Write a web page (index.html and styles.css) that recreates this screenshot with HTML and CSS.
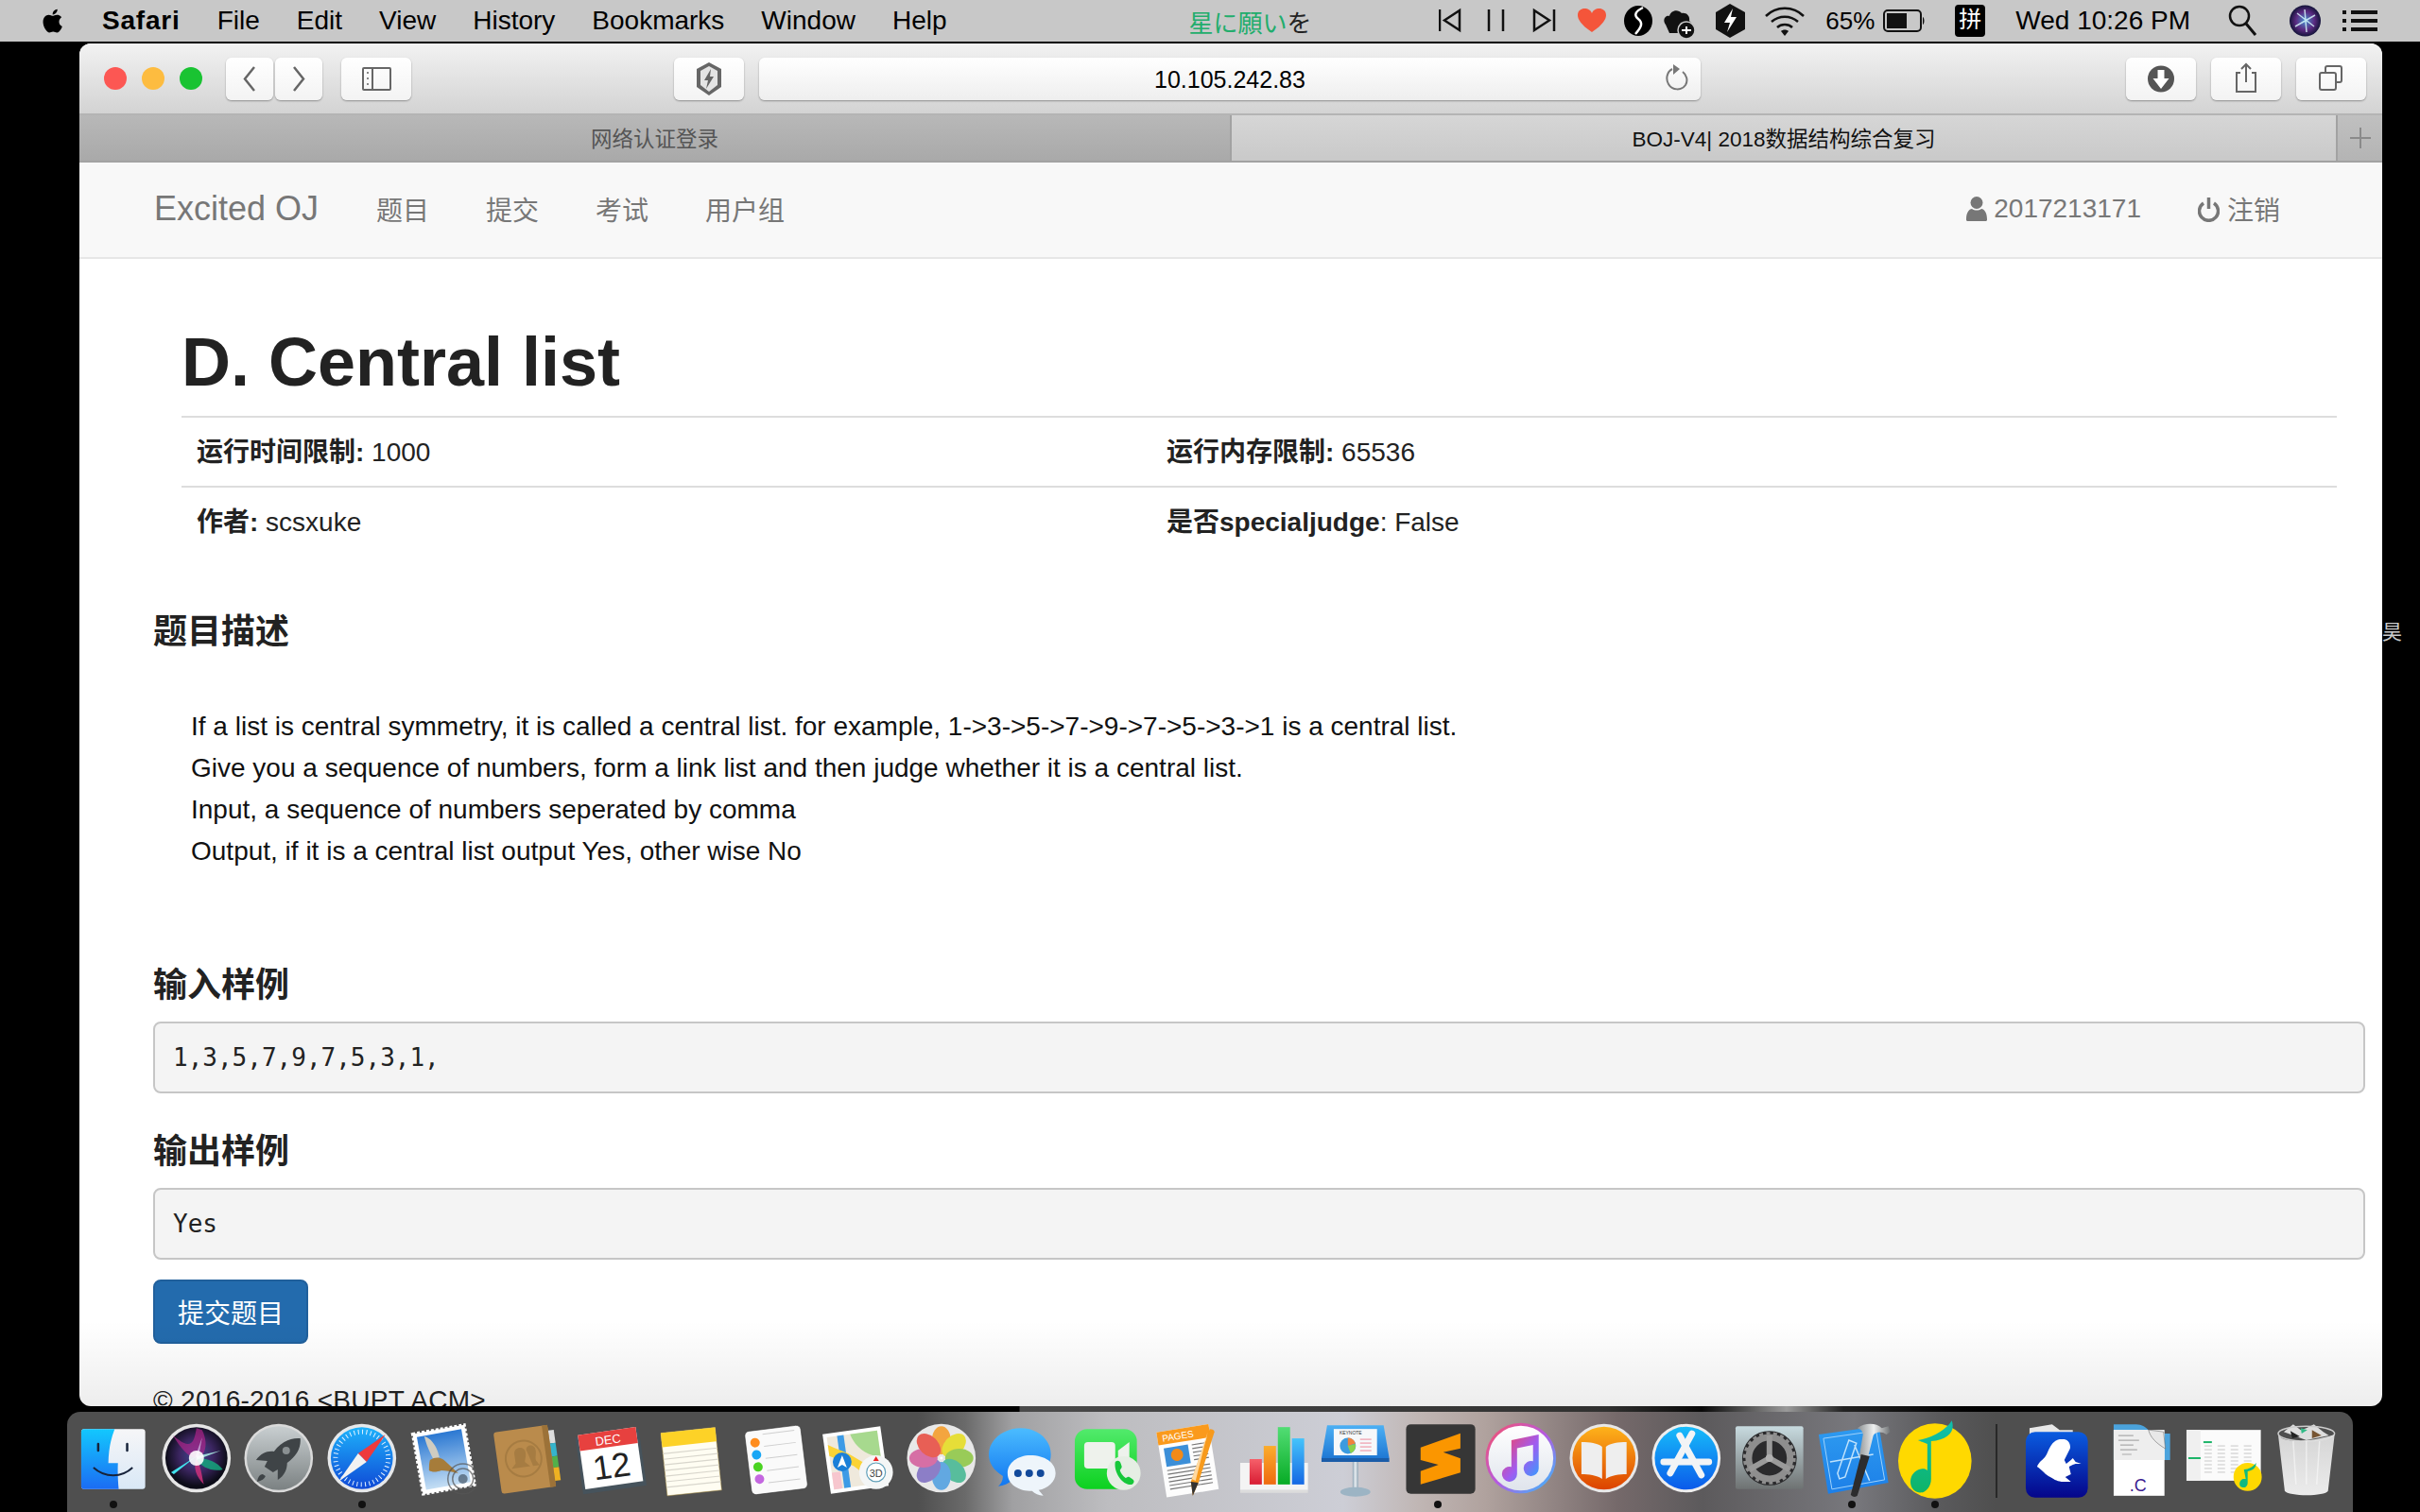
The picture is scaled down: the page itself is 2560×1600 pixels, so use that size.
FILE: index.html
```html
<!DOCTYPE html>
<html lang="zh">
<head>
  <meta charset="UTF-8" />
  <title>BOJ-V4| 2018数据结构综合复习</title>
  <link rel="stylesheet" href="styles.css">
</head>
<body>

<!-- mac menu bar -->
<div class="menubar">
  <svg class="apple" width="26" height="34" viewBox="0 0 26 32"><path fill="#000" d="M20.5 17c0-3.2 2.6-4.7 2.7-4.8-1.5-2.2-3.8-2.5-4.6-2.5-2-.2-3.8 1.1-4.8 1.1s-2.5-1.1-4.1-1.1c-2.1 0-4 1.2-5.1 3.1-2.2 3.8-.6 9.4 1.6 12.5 1 1.5 2.3 3.2 3.9 3.1 1.6-.1 2.2-1 4.1-1s2.4 1 4.1 1c1.7 0 2.8-1.5 3.8-3 1.2-1.7 1.7-3.4 1.7-3.5-.1 0-3.3-1.3-3.3-4.9zM17.4 7.6c.9-1 1.5-2.5 1.3-3.9-1.3.1-2.8.9-3.7 1.9-.8.9-1.5 2.4-1.3 3.8 1.4.1 2.9-.7 3.7-1.8z"/></svg>
  <div class="menus">
    <b>Safari</b><span>File</span><span>Edit</span><span>View</span><span>History</span><span>Bookmarks</span><span>Window</span><span>Help</span>
  </div>
  <div class="song">星に願い<span>を</span></div>
  <div class="status">
    <svg width="387" height="44" viewBox="0 0 387 44">
      <g fill="none" stroke="#111" stroke-width="2.500">
        <path d="M1 10v23M22 11 6 21.500 22 32z"/>
        <path d="M53 10v23M68 10v23"/>
        <path d="M122 10v23M101 11l16 10.500-16 10.500z"/>
      </g>
      <path fill="#f4553a" d="M162 34C150 26 147 20 147 16c0-5 4-7 7-7 4 0 7 2 8 5 1-3 4-5 8-5 3 0 7 2 7 7 0 4-3 10-15 18z"/>
      <ellipse cx="211" cy="22" rx="15" ry="16" fill="#000"/>
      <path fill="none" stroke="#fff" stroke-width="2.500" d="M216 8c-8 4-10 8-5 12s4 8-3 16"/>
      <path fill="#111" d="M240 26c-4-5 0-10 4-9 1-6 9-8 13-3 5-1 9 3 8 8l5 5-8 8h-18z"/>
      <circle cx="262" cy="32" r="9" fill="#111" stroke="#c8c8c8" stroke-width="1.500"/>
      <path fill="none" stroke="#fff" stroke-width="2" d="M257 32h10M262 28v8"/>
      <path fill="#111" d="M308 4l16 9v18l-16 9-15-9V13z"/>
      <path fill="#fff" d="M311 9l-9 15h6l-3 10 10-16h-6z"/>
      <g fill="none" stroke="#111" stroke-width="2.500">
        <path d="M346 17c11-11 29-11 40 0"/>
        <path d="M352 23c8-7 20-7 28 0"/>
        <path d="M358 29c4-4 12-4 16 0"/>
      </g>
      <path fill="#111" d="M366 38l-4-5c2-2 6-2 8 0z"/>
    </svg>
    <span class="pct">65%</span>
    <svg class="battery" width="45" height="44" viewBox="0 0 45 44">
      <rect x="1" y="11" width="39" height="22" rx="4" fill="none" stroke="#111" stroke-width="2"/>
      <rect x="4" y="14" width="21" height="16" fill="#111"/>
      <path d="M42 18c2 1 2 7 0 8z" fill="#111"/>
    </svg>
    <span class="ime">拼</span>
    <span class="clock">Wed 10:26 PM</span>
    <svg class="search" width="31" height="44" viewBox="0 0 31 44">
      <circle cx="12" cy="17" r="10" fill="none" stroke="#111" stroke-width="2.500"/>
      <path d="M19 25l10 12" stroke="#111" stroke-width="3"/>
    </svg>
    <svg class="siri-small" width="33" height="44" viewBox="0 0 33 44">
      <defs><radialGradient id="sirismall"><stop offset="0" stop-color="#4a8fd0"/><stop offset=".6" stop-color="#5a2a80"/><stop offset="1" stop-color="#14143a"/></radialGradient></defs>
      <circle cx="16.500" cy="22" r="16.500" fill="url(#sirismall)"/>
      <path d="M6 28 27 16M16 10l2 24M8 14l18 14" stroke="#dff" stroke-width="1.500" opacity=".8"/>
    </svg>
    <svg class="lines" width="37" height="44" viewBox="0 0 37 44">
      <path d="M9 13h28M9 22h28M9 31h28" stroke="#111" stroke-width="4"/>
      <path d="M0 13h4M0 22h4M0 31h4" stroke="#111" stroke-width="4"/>
    </svg>
  </div>
</div>

<div class="desktop">
  <div class="window">

    <div class="toolbar">
      <div class="lights"><i class="red"></i><i class="amber"></i><i class="green"></i></div>
      <div class="tool back"><svg width="50" height="45" viewBox="0 0 50 45"><path d="M30 10 20 22.500 30 35" fill="none" stroke="#666" stroke-width="2.500"/></svg></div>
      <div class="tool fwd"><svg width="50" height="45" viewBox="0 0 50 45"><path d="M20 10 30 22.500 20 35" fill="none" stroke="#666" stroke-width="2.500"/></svg></div>
      <div class="tool side"><svg width="74" height="45" viewBox="0 0 74 45"><rect x="23" y="11" width="29" height="23" rx="1" fill="none" stroke="#666" stroke-width="2"/><path d="M33 11v23" stroke="#666" stroke-width="2"/><path d="M28 15v14" stroke="#888" stroke-width="2" stroke-dasharray="2 4"/></svg></div>
      <div class="tool shield"><svg width="74" height="45" viewBox="0 0 74 45"><path d="M37 5l13 7v19l-13 9-13-9V12z" fill="#666"/><path d="M37 9l9 5v15l-9 7-9-7V14z" fill="#e4e4e4"/><path d="M39 12l-7 12h4l-2 9 8-13h-4z" fill="#666"/></svg></div>
      <div class="urlbar">
        <span>10.105.242.83</span>
        <svg class="reload" width="26" height="34" viewBox="0 0 26 34"><path d="M8 7C2 10 1 18 4 23c4 7 14 7 18 1 3-5 1-11-3-14" fill="none" stroke="#777" stroke-width="2"/><path d="M9 2v11l7-6z" fill="#777"/></svg>
      </div>
      <div class="tool dl"><svg width="74" height="45" viewBox="0 0 74 45"><circle cx="37" cy="22.500" r="14" fill="#555"/><path d="M33.500 13h7v9h5L37 33l-8.500-11h5z" fill="#fff"/></svg></div>
      <div class="tool share"><svg width="74" height="45" viewBox="0 0 74 45"><path d="M31 16h-4v20h20V16h-4" fill="none" stroke="#666" stroke-width="2"/><path d="M37 26V7M32 12l5-5 5 5" fill="none" stroke="#666" stroke-width="2"/></svg></div>
      <div class="tool tabs"><svg width="74" height="45" viewBox="0 0 74 45"><rect x="25" y="16" width="17" height="18" rx="2" fill="none" stroke="#666" stroke-width="2"/><path d="M31 16v-5a2 2 0 0 1 2-2h13a2 2 0 0 1 2 2v13a2 2 0 0 1-2 2h-4" fill="none" stroke="#666" stroke-width="2"/></svg></div>
    </div>

    <div class="tabbar">
      <div class="tab">网络认证登录</div>
      <div class="tab active">BOJ-V4| 2018数据结构综合复习</div>
      <div class="newtab"><svg width="22" height="22" viewBox="0 0 22 22"><path d="M11 0v22M0 11h22" stroke="#8a8a8a" stroke-width="2"/></svg></div>
    </div>

    <div class="page">
      <nav class="navbar">
        <a class="brand">Excited OJ</a>
        <a>题目</a>
        <a>提交</a>
        <a>考试</a>
        <a>用户组</a>
        <div class="nav-right">
          <a class="user"><svg width="22" height="28" viewBox="0 0 22 28"><circle cx="11" cy="7.500" r="6.500" fill="#777"/><path d="M1 27a2 2 0 0 1-1-2c0-7 3-11 6-11 3 2 7 2 10 0 3 0 6 4 6 11a2 2 0 0 1-1 2z" fill="#777"/></svg>2017213171</a>
          <a class="logout"><svg width="23" height="28" viewBox="0 0 23 28"><path d="M6 8a10 10 0 1 0 11 0" fill="none" stroke="#777" stroke-width="3.500"/><path d="M11.500 2v12" stroke="#777" stroke-width="3.500"/></svg>注销</a>
        </div>
      </nav>

      <div class="content">
        <h1>D. Central list</h1>
        <table class="info">
          <tr>
            <td class="col-a"><b>运行时间限制:</b> 1000</td>
            <td><b>运行内存限制:</b> 65536</td>
          </tr>
          <tr>
            <td class="col-a"><b>作者:</b> scsxuke</td>
            <td><b>是否specialjudge</b>: False</td>
          </tr>
        </table>

        <h4 class="first">题目描述</h4>
        <div class="desc">
          <p>If a list is central symmetry, it is called a central list. for example, 1-&gt;3-&gt;5-&gt;7-&gt;9-&gt;7-&gt;5-&gt;3-&gt;1 is a central list.</p>
          <p>Give you a sequence of numbers, form a link list and then judge whether it is a central list.</p>
          <p>Input, a sequence of numbers seperated by comma</p>
          <p>Output, if it is a central list output Yes, other wise No</p>
        </div>

        <h4 class="sample">输入样例</h4>
        <pre>1,3,5,7,9,7,5,3,1,</pre>
        <h4 class="sample second">输出样例</h4>
        <pre>Yes</pre>
        <button class="btn">提交题目</button>
        <footer>© 2016-2016 &lt;BUPT ACM&gt;</footer>
      </div>
    </div>
  </div>
  <span class="edge-char">昊</span>
</div>

<div class="strip"></div>

<!-- dock -->
<div class="dock">
  <div class="app on"><svg viewBox="0 0 88 88">
    <defs>
      <linearGradient id="fa" x1="0" y1="0" x2="0" y2="1"><stop offset="0" stop-color="#13c8fe"/><stop offset="1" stop-color="#1b6cf3"/></linearGradient>
      <linearGradient id="fb" x1="0" y1="0" x2="0" y2="1"><stop offset="0" stop-color="#f6f6f8"/><stop offset="1" stop-color="#d9e8f6"/></linearGradient>
    </defs>
    <rect x="10" y="13" width="68" height="64" rx="3" fill="url(#fb)"/>
    <path d="M13 13h32.500c-4 10-6.500 22-6.700 36.300H49c-.5 9 0 19 .8 27.700H13a3 3 0 0 1-3-3V16a3 3 0 0 1 3-3z" fill="url(#fa)"/>
    <path d="M28 29v7M58.800 29v7" stroke="#17233a" stroke-width="2.500" stroke-linecap="round"/>
    <path d="M23 54c12 11 30 11 41.500 0" fill="none" stroke="#17233a" stroke-width="2"/>
  </svg></div>

  <div class="app"><svg viewBox="0 0 88 88">
    <defs><radialGradient id="sa" cx=".5" cy=".45"><stop offset="0" stop-color="#3c4f95"/><stop offset=".55" stop-color="#3b2560"/><stop offset="1" stop-color="#0c0c18"/></radialGradient></defs>
    <circle cx="44" cy="44" r="36.500" fill="#e6e6e6"/><circle cx="44" cy="44" r="33" fill="url(#sa)"/>
    <path d="M44 12c-3 20-8 22-25 8 10 16 18 24 25 24 8 0 14-14 6-30z" fill="#b5258e" opacity=".65"/>
    <path d="M44 44c6 12 6 22 8 28-8-8-12-18-8-28z" fill="#d8327e" opacity=".8"/>
    <path d="M44 44c12 0 22 4 28 12-10 3-24-2-28-12z" fill="#15a67c" opacity=".85"/>
    <path d="M44 42 70 36 44 46z" fill="#a8e8e0" opacity=".9"/>
    <path d="M44 42 17 59l3 2z" fill="#42e0ec"/>
    <path d="M43 42 50 22l-4 22z" fill="#d8c8f0" opacity=".7"/>
    <circle cx="44" cy="44" r="8" fill="#fff" opacity=".9"/>
  </svg></div>

  <div class="app"><svg viewBox="0 0 88 88">
    <defs><linearGradient id="la" x1="0" y1="0" x2="0" y2="1"><stop offset="0" stop-color="#c9cfd1"/><stop offset="1" stop-color="#7b8182"/></linearGradient></defs>
    <circle cx="44" cy="44" r="36.500" fill="#dadada"/><circle cx="44" cy="44" r="34" fill="url(#la)"/>
    <path d="M67 23c-10-1-21 4-28 14-7-1-14 2-19 9l12 1-3 6 9 6 5-3 0 11c7-4 10-11 10-18 10-7 15-16 14-26z" fill="#3f4447"/>
    <path d="M27 61c-3 0-5 3-6 8 5-1 8-3 9-6z" fill="#3f4447"/>
    <circle cx="52" cy="36" r="4" fill="#8a9092"/>
  </svg></div>

  <div class="app on"><svg viewBox="0 0 88 88">
    <defs><linearGradient id="saf" x1="0" y1="0" x2="0" y2="1"><stop offset="0" stop-color="#1eb2fb"/><stop offset="1" stop-color="#0f49d6"/></linearGradient></defs>
    <circle cx="44" cy="44" r="36.500" fill="#e6e8ea"/><circle cx="44" cy="44" r="33" fill="url(#saf)"/>
    <circle cx="44" cy="44" r="28" fill="none" stroke="#e6f2ff" stroke-width="5" stroke-dasharray="1 3.400"/>
    <path d="M69 19 40 39 49 48z" fill="#ee3a3c"/>
    <path d="M19 69 40 39 49 48z" fill="#f2f2f2"/>
  </svg></div>

  <div class="app"><svg viewBox="0 0 88 88">
    <defs><linearGradient id="ma" x1="0" y1="0" x2="0" y2="1"><stop offset="0" stop-color="#2b78d2"/><stop offset="1" stop-color="#c4def4"/></linearGradient></defs>
    <g transform="rotate(-10 42 42)">
      <rect x="14" y="13" width="56" height="65" fill="#fff" stroke="#fff" stroke-width="3" stroke-dasharray="3 2"/>
      <rect x="18" y="17" width="48" height="57" fill="url(#ma)"/>
    </g>
    <path d="M22 21c8 2 14 12 16 22l-6 3c-4-8-8-16-10-25z" fill="#d0ccc0"/>
    <path d="M28 46c6-4 12-3 16 1l14 13c-8-2-14-3-18-3-5 2-10 2-13 0 0-4 0-8 1-11z" fill="#a67c3a"/>
    <circle cx="63" cy="66" r="16" fill="none" stroke="#555" stroke-width="1.500" opacity=".7"/>
    <circle cx="63" cy="66" r="11" fill="none" stroke="#555" stroke-width="1.500" opacity=".7"/>
    <circle cx="63" cy="66" r="5" fill="#456" opacity=".7"/>
  </svg></div>

  <div class="app"><svg viewBox="0 0 88 88">
    <g transform="rotate(-8 44 44)">
      <rect x="68" y="18" width="8" height="14" fill="#ddd"/><rect x="68" y="32" width="8" height="14" fill="#35b4cc"/><rect x="68" y="46" width="8" height="12" fill="#52b04a"/><rect x="68" y="58" width="8" height="14" fill="#eeb122"/>
      <rect x="12" y="12" width="58" height="66" rx="3" fill="#ba8b4c"/>
      <rect x="64" y="12" width="6" height="66" fill="#9c7238"/>
      <circle cx="40" cy="44" r="19" fill="none" stroke="#a67c42" stroke-width="2"/>
      <path d="M31 38c0-8 12-8 12 0 0 5-2 7-2 10l5 5H26l5-5c0-3 0-6 0-10z" fill="#a67c42"/>
      <path d="M44 35c1-6 10-5 10 2 0 5-2 8-1 11l3 5h-7c-2-8-3-12-5-18z" fill="#a67c42"/>
    </g>
  </svg></div>

  <div class="app"><svg viewBox="0 0 88 88">
    <g transform="rotate(-8 44 44)">
      <rect x="10" y="17" width="68" height="61" fill="#46535c"/>
      <rect x="13" y="15" width="62" height="58" fill="#fff"/>
      <rect x="13" y="15" width="62" height="17" fill="#e7413f"/>
      <text class="icon-text" x="44" y="29" font-size="13" fill="#fff" text-anchor="middle">DEC</text>
      <text class="icon-text" x="44" y="65" font-size="36" fill="#222" text-anchor="middle">12</text>
    </g>
  </svg></div>

  <div class="app"><svg viewBox="0 0 88 88">
    <g transform="rotate(-6 44 44)">
      <rect x="13" y="14" width="58" height="67" fill="#fffdf2" stroke="#b59a4c" stroke-width=".5"/>
      <rect x="13" y="14" width="58" height="15" fill="#fdd227"/>
      <path d="M13 36h58M13 42h58M13 48h58M13 54h58M13 60h58M13 66h58M13 72h58" stroke="#d8d6cc" stroke-width="1.200"/>
    </g>
  </svg></div>

  <div class="app"><svg viewBox="0 0 88 88">
    <g transform="rotate(-7 44 44)">
      <rect x="14" y="12" width="60" height="68" rx="5" fill="#fafafa" stroke="#333" stroke-width=".6"/>
      <circle cx="24" cy="25" r="5" fill="#ff8d1e"/><circle cx="24" cy="38" r="5" fill="#19a7f5"/><circle cx="24" cy="51" r="5" fill="#4ad321"/><circle cx="24" cy="64" r="5" fill="#c467e0"/>
      <path d="M33 17h34M33 30h34M33 43h34M33 56h34M33 69h34" stroke="#cfcfcf" stroke-width="1"/>
    </g>
  </svg></div>

  <div class="app"><svg viewBox="0 0 88 88">
    <g transform="rotate(-8 40 44)">
      <rect x="9" y="14" width="62" height="64" fill="#fff"/>
      <rect x="13" y="18" width="54" height="56" fill="#efe9dc"/>
      <path d="M24 18h7v56h-7z" fill="#3d9be6"/>
      <path d="M38 18h29v28c-14-2-26-14-29-28z" fill="#a7d98e"/>
      <path d="M13 38l24 14 8 8 8-6-20-16-14-8-6-4z" fill="#fbd335"/>
      <path d="M13 56h9v18h-9z" fill="#f7c6ce"/>
    </g>
    <circle cx="26" cy="48" r="10" fill="#1a7fd8"/><path d="M26 41l5 13-5-3-5 3z" fill="#fff"/>
    <circle cx="62" cy="59" r="18" fill="#f4f6f6"/><circle cx="62" cy="59" r="10" fill="#fff" stroke="#5f9fb8" stroke-width="1.200"/>
    <text class="icon-text" x="62" y="64" font-size="11" fill="#444" text-anchor="middle">3D</text>
    <path d="M62 42l3 5h-6z" fill="#e22"/>
  </svg></div>

  <div class="app"><svg viewBox="0 0 88 88">
    <circle cx="44" cy="44" r="36.500" fill="#e8e8e8"/>
    <g opacity=".85">
      <ellipse cx="44" cy="25" rx="10" ry="15" fill="#f69a22"/>
      <ellipse cx="44" cy="25" rx="10" ry="15" fill="#e6dd1a" transform="rotate(45 44 44)"/>
      <ellipse cx="44" cy="25" rx="10" ry="15" fill="#8cc63f" transform="rotate(90 44 44)"/>
      <ellipse cx="44" cy="25" rx="10" ry="15" fill="#3fb68f" transform="rotate(135 44 44)"/>
      <ellipse cx="44" cy="25" rx="10" ry="15" fill="#4b9ee0" transform="rotate(180 44 44)"/>
      <ellipse cx="44" cy="25" rx="10" ry="15" fill="#7d6cc2" transform="rotate(225 44 44)"/>
      <ellipse cx="44" cy="25" rx="10" ry="15" fill="#d45a9a" transform="rotate(270 44 44)"/>
      <ellipse cx="44" cy="25" rx="10" ry="15" fill="#e8483c" transform="rotate(315 44 44)"/>
    </g>
    <circle cx="44" cy="44" r="1.500" fill="#fff"/>
  </svg></div>

  <div class="app"><svg viewBox="0 0 88 88">
    <defs><linearGradient id="msg" x1="0" y1="0" x2="0" y2="1"><stop offset="0" stop-color="#4bbcff"/><stop offset="1" stop-color="#1176f0"/></linearGradient></defs>
    <path d="M40 12c19 0 32 13 32 28 0 16-14 29-32 29-4 0-7 0-10-1-3 3-8 5-14 6 3-3 5-6 5-11C11 57 6 49 6 40c0-15 15-28 34-28z" fill="url(#msg)"/>
    <path d="M50 41c16 0 27 8 27 19 0 9-8 16-18 18l5 6c-5 0-9-2-12-5-14 0-26-7-26-19 0-11 11-19 24-19z" fill="#eef5fb"/>
    <circle cx="37" cy="60" r="4" fill="#134a9b"/><circle cx="49" cy="60" r="4" fill="#134a9b"/><circle cx="61" cy="60" r="4" fill="#134a9b"/>
  </svg></div>

  <div class="app"><svg viewBox="0 0 88 88">
    <defs><linearGradient id="ft" x1="0" y1="0" x2="0" y2="1"><stop offset="0" stop-color="#52ea6c"/><stop offset="1" stop-color="#0cd11f"/></linearGradient></defs>
    <rect x="10" y="13" width="66" height="64" rx="13" fill="url(#ft)"/>
    <rect x="20" y="27" width="33" height="28" rx="4" fill="#eef2ec"/>
    <path d="M56 36l12-9v28l-12-9z" fill="#eef2ec"/>
    <circle cx="62" cy="60" r="18" fill="#e6eee4"/>
    <path d="M53 48c2-2 5-2 6 2l1 3c0 2-2 3-2 4 1 3 3 6 6 8 1 0 2-2 4-1l3 2c3 2 2 4 0 6-9 2-20-12-18-24z" fill="#16c83a"/>
  </svg></div>

  <div class="app"><svg viewBox="0 0 88 88">
    <g transform="rotate(-9 40 44)">
      <rect x="13" y="12" width="56" height="70" fill="#fdfdfd"/>
      <rect x="13" y="12" width="56" height="14" fill="#fa9a1c"/>
      <text class="icon-text" x="18" y="23" font-size="10" fill="#fff">PAGES</text>
      <rect x="18" y="30" width="26" height="20" fill="#3c8fd8"/>
      <circle cx="31" cy="39" r="6.500" fill="#f28a18"/>
      <path d="M48 31h16M48 35h16M48 39h16M48 43h16M48 47h16M18 54h46M18 58h46M18 62h46M18 66h46M18 70h46M18 74h46" stroke="#777" stroke-width="1.200"/>
    </g>
    <path d="M65 13c3 0 5 1 5 3L53 70l-6 14-2-15z" fill="#f79a1c"/>
    <path d="M63 16l-17 50 4 2z" fill="#ffd9a0"/>
    <path d="M45 69l8 1-6 14z" fill="#333"/>
  </svg></div>

  <div class="app"><svg viewBox="0 0 88 88">
    <defs>
      <linearGradient id="n1" x1="0" y1="0" x2="0" y2="1"><stop offset="0" stop-color="#f6606a"/><stop offset="1" stop-color="#d81c33"/></linearGradient>
      <linearGradient id="n2" x1="0" y1="0" x2="0" y2="1"><stop offset="0" stop-color="#fbad2c"/><stop offset="1" stop-color="#ef6a10"/></linearGradient>
      <linearGradient id="n3" x1="0" y1="0" x2="0" y2="1"><stop offset="0" stop-color="#52dd74"/><stop offset="1" stop-color="#07ab25"/></linearGradient>
      <linearGradient id="n4" x1="0" y1="0" x2="0" y2="1"><stop offset="0" stop-color="#45c4fb"/><stop offset="1" stop-color="#1568e4"/></linearGradient>
    </defs>
    <path d="M9 49h72v29H9z" fill="#f4f4f4"/>
    <path d="M9 78h72v3H9z" fill="#dcdcdc"/>
    <rect x="19" y="45" width="13" height="27" fill="url(#n1)"/>
    <rect x="34" y="31" width="13" height="41" fill="url(#n2)"/>
    <rect x="49" y="11" width="13" height="61" fill="url(#n3)"/>
    <rect x="64" y="23" width="13" height="49" fill="url(#n4)"/>
  </svg></div>

  <div class="app"><svg viewBox="0 0 88 88">
    <defs>
      <linearGradient id="k1" x1="0" y1="0" x2="0" y2="1"><stop offset="0" stop-color="#4cb0f4"/><stop offset="1" stop-color="#1f78d4"/></linearGradient>
      <linearGradient id="k2" x1="0" y1="0" x2="1" y2="0"><stop offset="0" stop-color="#8fa4b4"/><stop offset=".5" stop-color="#e8eef2"/><stop offset="1" stop-color="#8fa4b4"/></linearGradient>
    </defs>
    <path d="M14 9h60l6 35H8z" fill="url(#k1)"/>
    <rect x="8" y="44" width="72" height="4" fill="#1a5ca8"/>
    <rect x="21" y="13" width="46" height="28" fill="#f6f8fa"/>
    <text class="icon-text" x="27" y="19" font-size="5" fill="#333">KEYNOTE</text>
    <circle cx="36" cy="31" r="8.500" fill="#3c9be0"/><path d="M36 31V22.500a8.500 8.500 0 0 1 8 6z" fill="#f0823c"/><path d="M36 31l8-2a8.500 8.500 0 0 1-5 10z" fill="#8bd24a"/>
    <path d="M49 24h12M49 28h12M49 32h12M49 36h12" stroke="#e89" stroke-width="1"/>
    <rect x="41" y="48" width="6" height="28" fill="url(#k2)"/>
    <ellipse cx="44" cy="80" rx="16" ry="5" fill="#9cb4c4"/>
  </svg></div>

  <div class="app on"><svg viewBox="0 0 88 88">
    <rect x="9.500" y="8" width="73.500" height="74" rx="5" fill="#363636"/>
    <path d="M24.900 32.700 67.200 17.700v16L48.900 37.700 67.200 44.300v15L24.900 72V57.700L43.900 51 24.900 46z" fill="#fb9600"/>
  </svg></div>

  <div class="app"><svg viewBox="0 0 88 88">
    <defs>
      <linearGradient id="it" x1="0" y1="0" x2="1" y2="1"><stop offset="0" stop-color="#fa5262"/><stop offset=".5" stop-color="#b659e0"/><stop offset="1" stop-color="#2ec4ff"/></linearGradient>
      <linearGradient id="no" x1="0" y1="0" x2="1" y2="1"><stop offset="0" stop-color="#f8405c"/><stop offset=".55" stop-color="#a05cf0"/><stop offset="1" stop-color="#28a4ff"/></linearGradient>
      <linearGradient id="bg" x1="0" y1="0" x2="0" y2="1"><stop offset="0" stop-color="#fff"/><stop offset="1" stop-color="#dfe4ec"/></linearGradient>
    </defs>
    <circle cx="44" cy="44" r="37.500" fill="url(#it)"/><circle cx="44" cy="44" r="34.500" fill="url(#bg)"/>
    <path d="M34 25 63 19v36a8 8 0 1 1-6-7.700V30l-17 3.500V61a8 8 0 1 1-6-7.700z" fill="url(#no)"/>
  </svg></div>

  <div class="app"><svg viewBox="0 0 88 88">
    <defs><linearGradient id="ib" x1="0" y1="0" x2="0" y2="1"><stop offset="0" stop-color="#feb31a"/><stop offset="1" stop-color="#dc4200"/></linearGradient></defs>
    <circle cx="44" cy="44" r="36.500" fill="#e8e8e8"/><circle cx="44" cy="44" r="33.500" fill="url(#ib)"/>
    <path d="M42 32c-5-4-13-5-22-5v34c8 0 16 1 22 5z" fill="#eee"/>
    <path d="M46 32c5-4 13-5 22-5v34c-8 0-16 1-22 5z" fill="#eee"/>
  </svg></div>

  <div class="app"><svg viewBox="0 0 88 88">
    <defs><linearGradient id="as" x1="0" y1="0" x2="0" y2="1"><stop offset="0" stop-color="#17bcfa"/><stop offset="1" stop-color="#0b5aea"/></linearGradient></defs>
    <circle cx="44" cy="44" r="36.500" fill="#eee"/><circle cx="44" cy="44" r="33.500" fill="url(#as)"/>
    <g fill="none" stroke="#f2f4f6" stroke-width="7" stroke-linecap="round">
      <path d="M50 18 27 60"/>
      <path d="M37 20 60 62"/>
      <path d="M20 48h48"/>
    </g>
  </svg></div>

  <div class="app"><svg viewBox="0 0 88 88">
    <defs><linearGradient id="sp" x1="0" y1="0" x2="0" y2="1"><stop offset="0" stop-color="#c8dbe0"/><stop offset="1" stop-color="#6e7272"/></linearGradient></defs>
    <rect x="8" y="10" width="72" height="67" rx="2" fill="url(#sp)"/>
    <circle cx="44" cy="44" r="29" fill="#2a2a2c"/>
    <circle cx="44" cy="44" r="22" fill="none" stroke="#8e8e8e" stroke-width="7"/>
    <circle cx="44" cy="44" r="26" fill="none" stroke="#8e8e8e" stroke-width="4" stroke-dasharray="4 3.400"/>
    <path d="M44 44V20M44 44 23 56M44 44l21 12" stroke="#9a9a9a" stroke-width="6"/>
    <circle cx="44" cy="44" r="4" fill="#b0b0b0"/>
  </svg></div>

  <div class="app on"><svg viewBox="0 0 88 88">
    <defs>
      <linearGradient id="xc" x1="0" y1="0" x2="0" y2="1"><stop offset="0" stop-color="#2e9bf0"/><stop offset="1" stop-color="#1c7fe8"/></linearGradient>
      <linearGradient id="hm" x1="0" y1="0" x2="1" y2="0"><stop offset="0" stop-color="#8a8e90"/><stop offset=".5" stop-color="#eef0f0"/><stop offset="1" stop-color="#6f7274"/></linearGradient>
    </defs>
    <path d="M8 19 72 10l10 60-64 12z" fill="url(#xc)"/>
    <path d="M13 23 69 15l9 52-56 10z" fill="none" stroke="#9fd2fa" stroke-width="1"/>
    <path d="M20 48 66 40M28 60 40 25l8 3-12 36-6 2zM46 30l16 38" fill="none" stroke="#bfe2fc" stroke-width="1.500"/>
    <path d="M49 12c8-6 20-6 26 0l7-2 2 6-4 3c-5-4-12-3-14 1l-6 24-9-2 4-23c0-4-3-6-6-7z" fill="url(#hm)"/>
    <path d="M53 40l9 2-13 42c-2 2-6 1-7-1z" fill="#2c2c2e"/>
  </svg></div>

  <div class="app on"><svg viewBox="0 0 88 88">
    <defs><linearGradient id="qq" x1="0" y1="0" x2="0" y2="1"><stop offset="0" stop-color="#10bfae"/><stop offset="1" stop-color="#0eb468"/></linearGradient></defs>
    <ellipse cx="44" cy="47" rx="39" ry="40" fill="#ffd900"/>
    <path d="M26 25 C42 22 56 14 62 4c4 12-4 20-22 22v40c0 10-8 17-15 14-10-4-9-20 2-24 4-1 7-1 9 1V29z" fill="url(#qq)"/>
  </svg></div>

  <div class="separator"></div>

  <div class="app"><svg viewBox="0 0 88 88">
    <defs><linearGradient id="vz" x1="0" y1="0" x2="0" y2="1"><stop offset="0" stop-color="#0a5ce0"/><stop offset="1" stop-color="#05058a"/></linearGradient></defs>
    <path d="M14 12l24-4 8 6h14v10H14z" fill="#e8e8e8"/>
    <rect x="10" y="16" width="66" height="70" rx="10" fill="url(#vz)"/>
    <path d="M51 24c5 1 7 6 6 10l-6 12 2 4 5-4 2-2 3 4 6 2-6 0-3 1-4 2 2 8-6 3 6 5-8 0c-6 0-9-2-14-5-5-2-9-8-14-11 2-5 6-7 9-11 4-6 5-16 15-18z" fill="#fff"/>
  </svg></div>

  <div class="app"><svg viewBox="0 0 88 88">
    <path d="M15 8h24c5 0 12 3 16 10h20v28H15z" fill="#4ba3dc"/>
    <rect x="15" y="14" width="54" height="70" fill="#fff"/>
    <path d="M15 14h40c4 4 4 10 14 16v16H15z" fill="#eeeeee"/>
    <path d="M52 14c2 8 8 14 18 20L68 16z" fill="#e8e8e8" stroke="#555" stroke-width=".5"/>
    <path d="M20 20h16M20 25h22M22 30h14M22 35h18M24 40h10" stroke="#aaa" stroke-width="1.200"/>
    <text class="icon-text" x="41" y="79" font-size="18" fill="#3a1a90" text-anchor="middle">.C</text>
  </svg></div>

  <div class="app"><svg viewBox="0 0 88 88">
    <rect x="5" y="14" width="79" height="54" fill="#fbfbfb"/>
    <rect x="5" y="14" width="15" height="54" fill="#f0f0f0"/>
    <rect x="7" y="43" width="13" height="2" fill="#1cb468"/>
    <rect x="23" y="26" width="9" height="2" fill="#1cb468"/>
    <path d="M24 31h56M24 35h56M24 39h56M24 43h56M24 47h56M24 51h56M24 55h56M24 59h56" stroke="#c8c8c8" stroke-width="1" stroke-dasharray="8 6"/>
    <ellipse cx="70" cy="64" rx="15" ry="15" fill="#ffd900"/>
    <path d="M66 56c5 0 10-3 13-7 0 5-3 8-9 9v12c0 4-3 6-6 5-4-1-3-8 1-9h3z" fill="#10b980"/>
  </svg></div>

  <div class="app"><svg viewBox="0 0 88 88">
    <defs>
      <linearGradient id="tr" x1="0" y1="0" x2="0" y2="1"><stop offset="0" stop-color="#dcdcdc"/><stop offset="1" stop-color="#f4f4f4"/></linearGradient>
    </defs>
    <path d="M20 16l10-8 8 6 6-2 8-4 10 8 6 4-24 5z" fill="#dedede"/>
    <path d="M27 15l10 6-8 2z" fill="#222"/><path d="M50 14l10 6-10 3z" fill="#753"/><path d="M38 12l7 2-6 4z" fill="#3b8"/>
    <ellipse cx="44" cy="18" rx="30" ry="8" fill="none" stroke="#ccc" stroke-width="1.500"/>
    <path d="M14 19c3 8 27 10 60 0l-7 60c-3 6-42 6-46 0z" fill="url(#tr)" opacity=".95"/>
    <path d="M44 26v46M30 26l3 46M58 26l-3 46" stroke="#fff" stroke-width="1.500" opacity=".5"/>
  </svg></div>
</div>

</body>
</html>
```

FILE: styles.css
```css
* {
  box-sizing: border-box;
}

html, body {
  margin: 0;
  padding: 0;
}

body {
  width: 2560px;
  height: 1600px;
  overflow: hidden;
  background: #000;
  color: #222;
  font-family: "Liberation Sans", "Noto Sans CJK SC", sans-serif;
  font-size: 28px;
}

/* menu bar */
.menubar {
  display: flex;
  align-items: center;
  height: 44px;
  padding: 0 45px 0 42px;
  background: #c8c8c8;
  color: #000;
  white-space: nowrap;
}

.apple {
  margin-right: 40px;
}

.menus {
  display: flex;
  gap: 39px;
}

.menus b {
  letter-spacing: 0.8px;
}

.song {
  margin-left: 256px;
  font-family: "Noto Sans CJK JP", sans-serif;
  font-size: 26px;
  color: #22ad6c;
}

.song span {
  color: #222;
}

.status {
  display: flex;
  align-items: center;
  margin-left: auto;
}

.pct {
  margin-left: 22px;
  font-size: 26px;
}

.battery {
  margin-left: 9px;
}

.ime {
  display: block;
  width: 32px;
  height: 34px;
  margin-left: 31px;
  border-radius: 4px;
  background: #000;
  color: #fff;
  font-size: 24px;
  line-height: 32px;
  text-align: center;
}

.clock {
  margin-left: 32px;
}

.search {
  margin-left: 40px;
}

.siri-small {
  margin-left: 34px;
}

.lines {
  margin-left: 23px;
}

/* desktop + safari window */
.desktop {
  position: relative;
  height: 1444px;
  padding: 2px 0 0 84px;
}

.edge-char {
  position: absolute;
  top: 608px;
  left: 2520px;
  color: #ccc;
  font-size: 21px;
}

.window {
  display: flex;
  flex-direction: column;
  width: 2436px;
  height: 1442px;
  overflow: hidden;
  border-radius: 12px;
  background: #fff;
}

.toolbar {
  display: flex;
  align-items: center;
  flex: 0 0 76px;
  padding: 0 17px 0 26px;
  border-bottom: 2px solid #b4b4b4;
  background: linear-gradient(#f2f2f2, #d3d3d3);
}

.lights {
  display: flex;
  gap: 16px;
  margin-right: 25px;
}

.lights i {
  display: block;
  width: 24px;
  height: 24px;
  border-radius: 50%;
}

.red { background: #fc5753; }
.amber { background: #fdbc40; }
.green { background: #19c332; }

.tool {
  height: 45px;
  border-radius: 6px;
  background: linear-gradient(#ffffff, #f3f3f3);
  box-shadow: 0 1px 2px rgba(0, 0, 0, 0.35);
}

.tool svg {
  display: block;
}

.fwd {
  margin-left: 2px;
}

.side {
  margin-left: 20px;
}

.shield {
  margin-left: 278px;
}

.urlbar {
  display: flex;
  align-items: center;
  justify-content: center;
  position: relative;
  width: 1001px;
  height: 45px;
  margin: 0 450px 0 16px;
  padding-top: 3px;
  border-radius: 6px;
  background: linear-gradient(#ffffff, #eeeeee);
  box-shadow: 0 1px 2px rgba(0, 0, 0, 0.35);
  color: #000;
  font-size: 25px;
}

.reload {
  position: absolute;
  top: 5px;
  right: 12px;
}

.share, .tabs {
  margin-left: 16px;
}

.tabbar {
  display: flex;
  flex: 0 0 50px;
  border-bottom: 2px solid #a2a2a2;
  font-size: 22.500px;
}

.tab {
  display: flex;
  align-items: center;
  justify-content: center;
  flex: 0 0 1217px;
  padding-bottom: 3px;
  background: linear-gradient(#b8b8b8, #a9a9a9);
  color: #555;
}

.tab.active {
  flex: 0 0 1170px;
  border-left: 2px solid #a2a2a2;
  background: linear-gradient(#d6d6d6, #c9c9c9);
  color: #111;
}

.newtab {
  display: flex;
  align-items: center;
  justify-content: center;
  flex: 1;
  border-left: 2px solid #a2a2a2;
  background: linear-gradient(#c0c0c0, #b4b4b4);
}

/* the page inside safari */
.page {
  position: relative;
  flex: 1;
  overflow: hidden;
}

.page::after {
  content: "";
  position: absolute;
  left: 0;
  right: 0;
  bottom: 0;
  height: 90px;
  background: linear-gradient(rgba(0, 0, 0, 0), rgba(0, 0, 0, 0.07));
  pointer-events: none;
}

.navbar {
  display: flex;
  align-items: center;
  height: 102px;
  padding: 0 108px 2px 79px;
  border-bottom: 2px solid #e7e7e7;
  background: #f8f8f8;
  color: #777;
}

.navbar a {
  display: flex;
  align-items: center;
  margin-right: 60px;
}

.navbar .brand {
  margin-right: 61px;
  font-size: 36px;
}

.nav-right {
  display: flex;
  margin-left: auto;
}

.user svg {
  margin-right: 7px;
}

.logout svg {
  margin-right: 8px;
}

.navbar .logout {
  margin-right: 0;
}

.content {
  padding: 0 18px 0 78px;
}

h1 {
  margin: 70px 0 17px 30px;
  font-size: 72px;
  line-height: 79px;
  font-weight: bold;
}

.info {
  width: 2280px;
  margin-left: 30px;
  border-collapse: collapse;
  line-height: 40px;
}

.info td {
  padding: 17px 16px 15px;
  border-top: 2px solid #ddd;
}

.col-a {
  width: 1026px;
}

h4 {
  margin: 0;
  font-size: 36px;
  line-height: 40px;
  font-weight: bold;
}

h4.first {
  margin-top: 61px;
}

.desc {
  margin-top: 58px;
  padding-left: 40px;
  color: #111;
}

.desc p {
  margin: 0;
  line-height: 44px;
}

h4.sample {
  margin-top: 100px;
}

h4.second {
  margin-top: 42px;
}

pre {
  margin: 18px 0 0;
  padding: 18px 19px;
  border: 2px solid #c6c6c6;
  border-radius: 8px;
  background: #f4f4f4;
  font-family: "DejaVu Sans Mono", monospace;
  font-size: 26px;
  line-height: 36px;
  color: #222;
}

.btn {
  display: block;
  width: 164px;
  height: 68px;
  margin-top: 21px;
  padding: 0;
  border: 2px solid #21609c;
  border-radius: 8px;
  background: #236bad;
  color: #fff;
  font-family: inherit;
  font-size: 28px;
}

footer {
  margin-top: 40px;
  line-height: 40px;
  letter-spacing: 0.3px;
  color: #222;
}

/* strip of wallpaper between the window and the dock */
.strip {
  height: 6px;
  background: linear-gradient(to right, #000 1078px, #4a4a4a 1079px, #3c3c3c 1400px, #30302f 1700px, #080808 1800px, #9a9a9a 1890px, #222 1950px, #050505 2060px, #000 2100px);
}

/* dock */
.dock {
  display: flex;
  width: 2418px;
  height: 106px;
  margin-left: 71px;
  padding: 5px 0 0 5.200px;
  border-radius: 14px 14px 0 0;
  background: linear-gradient(to right, #4f4f4f 0, #4f4f4f 900px, #6a6a6a 950px, #a0a0a2 1000px, #bdbdc0 1100px, #cdced6 1350px, #c0b6b4 1430px, #b0a29e 1500px, #75696a 1640px, #5c5a5c 1730px, #78787d 1890px, #5a5a5c 1980px, #4f4f4f 2040px);
}

.app {
  flex: 0 0 87.600px;
}

.app svg {
  display: block;
  width: 87.600px;
  height: 88px;
  overflow: visible;
}

.app.on::after {
  content: "";
  display: block;
  width: 8px;
  height: 8px;
  margin: 1px auto 0;
  border-radius: 50%;
  background: #111;
}

.separator {
  flex: 0 0 42.400px;
  position: relative;
}

.separator::before {
  content: "";
  display: block;
  width: 2px;
  height: 78px;
  margin: 8px auto 0;
  background: #282828;
}

.icon-text {
  font-family: "Liberation Sans", sans-serif;
}
```
